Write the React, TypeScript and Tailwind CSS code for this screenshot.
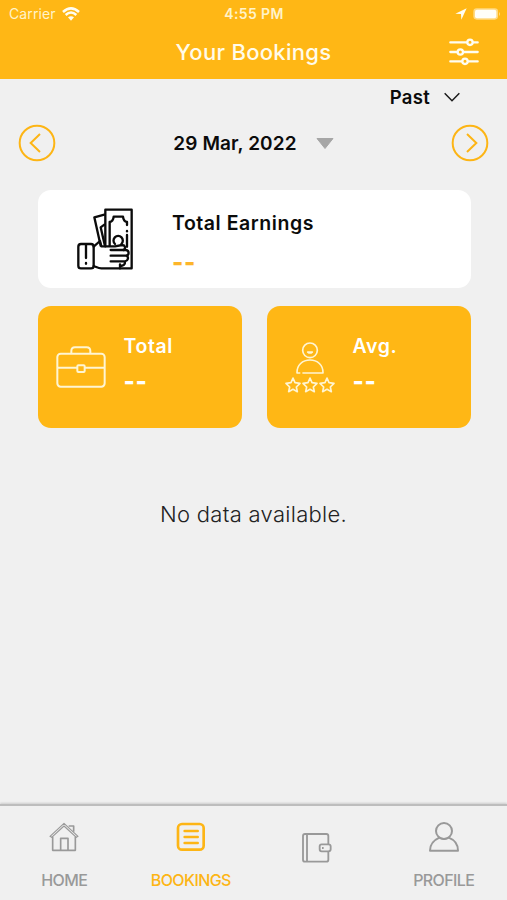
import { useState } from "react";
import type { ReactNode } from "react";

const MoneyIcon = () => (
  <svg
    viewBox="0 0 210 228"
    className="w-[70px] h-[76px] shrink-0"
    fill="none"
    stroke="#0b0b0b"
    strokeWidth="7"
    strokeLinejoin="round"
    strokeLinecap="round"
  >
    {/* bills */}
    <path d="M106 139V29H185V205H150" />
    <path d="M103 44L73 52L92 137M103 74L92 82L104 134" />
    <path d="M119 137V66C126 65 130 60 131 50H159C160 60 164 65 171 66V75M171 105V140" />
    <path d="M171 93v1" />
    <path d="M135 132A14 14 0 1 1 154 132" />
    {/* hand */}
    <path d="M71 140L90 123L94 139H135L156 135C166 136 168 144 161 150H122" />
    <path d="M160 150H168C178 152 178 164 170 167H122" />
    <path d="M170 167C177 172 174 183 165 184H122M165 184C166 194 160 198 150 198M71 198C80 201 84 205 94 205H150V193" />
    <path d="M33 132H63Q71 132 71 140V197Q71 205 63 205H33Q25 205 25 197V140Q25 132 33 132Z" />
    <path d="M48 134V174M48 189v2" />
  </svg>
);

const BriefcaseIcon = () => (
  <svg
    viewBox="0 0 150 126"
    className="w-[50px] h-[42px] shrink-0"
    fill="none"
    stroke="#fff5d2"
    strokeWidth="6"
    strokeLinejoin="round"
  >
    <rect x="4" y="23" width="142" height="99" rx="10" />
    <path d="M46 22V15Q46 4 57 4H92Q103 4 103 15V22" />
    <path d="M4 65H64M87 65H146" />
    <rect x="64" y="58" width="22" height="20" rx="3" />
  </svg>
);

const RatingIcon = () => (
  <svg
    viewBox="0 0 150 156"
    className="w-[50px] h-[52px] shrink-0"
    fill="none"
    stroke="#fff5d2"
    strokeWidth="5"
    strokeLinejoin="round"
    strokeLinecap="round"
  >
    <circle cx="75" cy="28" r="22" />
    <path d="M68 33Q75 39 82 33Z" />
    <path d="M44 96H36C35 72 53 57 75 57S115 72 114 96H54" />
    {[24, 75, 126].map((x) => (
      <path
        key={x}
        transform={`translate(${x} 133)`}
        d="M0 -22L6 -8L21 -6L10 5L13 19L0 12L-13 19L-10 5L-21 -6L-6 -8Z"
      />
    ))}
  </svg>
);

const HomeIcon = () => (
  <svg viewBox="0 0 90 90" className="w-[30px] h-[30px]" fill="none" stroke="#999" strokeWidth="5" strokeLinejoin="round">
    <path d="M3 43L45 4L87 43L82 46L45 12L8 46Z" strokeWidth="3.5" />
    <path d="M11 44V85H79V44M35 85V49H57V85M59 12H74V29" />
  </svg>
);

const BookingsIcon = () => (
  <svg viewBox="0 0 90 90" className="w-[30px] h-[30px]" fill="none" stroke="#fdb515" strokeWidth="8" strokeLinecap="round">
    <rect x="6" y="6" width="77" height="77" rx="12" />
    <path d="M26 27H65M26 45H65M26 63H65" />
  </svg>
);

const WalletIcon = () => (
  <svg viewBox="0 0 90 90" className="w-[30px] h-[30px]" fill="none" stroke="#999" strokeWidth="5.5" strokeLinejoin="round">
    <path d="M79 33V9Q79 3 73 3H9Q3 3 3 9V80Q3 86 9 86H73Q79 86 79 80V56M15 3V86" />
    <path d="M79 34H59Q53 34 53 40V49Q53 55 59 55H79Q86 55 86 49V40Q86 34 79 34Z" />
    <path d="M60 45h5" />
  </svg>
);

const ProfileIcon = () => (
  <svg viewBox="0 0 90 90" className="w-[30px] h-[30px]" fill="none" stroke="#999" strokeWidth="6" strokeLinejoin="round">
    <circle cx="45" cy="27" r="24" />
    <path d="M3 86C3 64 20 52 31 47Q45 55 59 47C72 52 87 64 87 86Z" />
  </svg>
);

function StatusBar() {
  return (
    <div className="grid grid-cols-3 items-center h-7 pl-[9px] pr-[6px] text-sm leading-none text-[#fff3ca]">
      <div className="flex items-center gap-[6px]">
        <span className="tracking-[0.1px]">Carrier</span>
        <svg viewBox="0 0 54 42" className="w-[18px] h-[14px]" fill="none" stroke="#fffdf2" strokeWidth="7.5">
          <path d="M3 15Q27 -7 51 15M11 24Q27 9 43 24" />
          <path d="M18 31Q27 24 36 31L27 41Z" fill="#fffdf2" stroke="none" />
        </svg>
      </div>
      <span className="text-center font-semibold text-sm leading-none tracking-[0.4px] pr-[2px]">4:55 PM</span>
      <div className="flex items-center justify-end gap-[6px]">
        <svg viewBox="0 0 36 36" className="w-3 h-3" fill="#fffdf2">
          <path d="M35 1L19 35L18 18L1 17Z" />
        </svg>
        <svg viewBox="0 0 84 36" className="w-[28px] h-3">
          <rect x="1" y="1" width="74" height="34" rx="10" fill="#ffda83" />
          <rect x="6" y="5" width="64" height="26" rx="6" fill="#fffef8" />
          <path d="M78 12Q84 18 78 24Z" fill="#ffda83" />
        </svg>
      </div>
    </div>
  );
}

type ArrowProps = { path: string; onClick: () => void };

function ArrowButton({ path, onClick }: ArrowProps) {
  return (
    <button onClick={onClick} className="w-[38px] h-[38px]">
      <svg viewBox="0 0 114 114" fill="none" stroke="#fdb515" strokeWidth="6">
        <circle cx="57" cy="57" r="52" />
        <path d={path} />
      </svg>
    </button>
  );
}

type StatCardProps = { icon: ReactNode; label: string; value: string };

function StatCard({ icon, label, value }: StatCardProps) {
  return (
    <div className="flex w-[204px] h-[122px] rounded-[13px] bg-[#ffb715] pl-[18px] text-white">
      <div className="w-[68px] flex items-center">{icon}</div>
      <div className="pt-7 font-semibold">
        <div className="text-[19.5px] leading-6 tracking-[0.6px]">{label}</div>
        <div className="mt-3 text-[24px] leading-6 font-extrabold tracking-[0.8px]">{value}</div>
      </div>
    </div>
  );
}

const tabs = [
  { name: "HOME", icon: <HomeIcon />, label: true },
  { name: "BOOKINGS", icon: <BookingsIcon />, label: true },
  { name: "WALLET", icon: <WalletIcon />, label: false },
  { name: "PROFILE", icon: <ProfileIcon />, label: true },
];

export default function App() {
  const [date, setDate] = useState(new Date(2022, 2, 29));
  const [active, setActive] = useState("BOOKINGS");

  const moveDay = (days: number) => {
    const next = new Date(date);
    next.setDate(next.getDate() + days);
    setDate(next);
  };

  const month = date.toLocaleString("en-US", { month: "short" });
  const dateLabel = `${date.getDate()} ${month}, ${date.getFullYear()}`;

  return (
    <div className="flex flex-col w-[507px] h-[900px] overflow-hidden bg-[#f0f0f0] text-[#0b0b0b] font-[Inter,sans-serif]">
      <header className="h-[79px] bg-[#ffb715]">
        <StatusBar />
        <div className="grid grid-cols-[1fr_auto_1fr] items-center h-12 pr-7">
          <h1 className="col-start-2 pl-7 text-[22px] font-medium text-[#fffbea] tracking-[0.3px]">
            Your Bookings
          </h1>
          <button className="justify-self-end">
            <svg viewBox="0 0 90 84" className="w-[30px] h-7" fill="#ffb715" stroke="#fffdf2" strokeWidth="7" strokeLinecap="round">
              <path d="M4 13H86M4 42H86M4 70H86" />
              <circle cx="63" cy="13" r="8" />
              <circle cx="34" cy="42" r="8" />
              <circle cx="48" cy="70" r="8" />
            </svg>
          </button>
        </div>
      </header>

      <main className="flex-1">
        <div className="flex items-center justify-end gap-[14px] h-9 pr-[47px]">
          <span className="pt-[2px] text-[18.5px] font-semibold tracking-[0.3px]">Past</span>
          <svg viewBox="0 0 48 30" className="w-4 h-[10px]" fill="none" stroke="#1a1a1a" strokeWidth="4.5">
            <path d="M2 4L24 26L46 4" />
          </svg>
        </div>

        <div className="flex items-center justify-between pl-[18px] pr-[18px] mt-[9px]">
          <ArrowButton path="M66 30L38 57L66 84" onClick={() => moveDay(-1)} />
          <button className="flex items-center gap-[19px]">
            <span className="pt-[2px] text-[19px] font-semibold tracking-[0.1px]">{dateLabel}</span>
            <svg viewBox="0 0 18 11" className="w-[18px] h-[11px]">
              <path d="M1 0.5H17L9 10.5Z" fill="#a6a6a6" stroke="#a6a6a6" strokeLinejoin="round" />
            </svg>
          </button>
          <ArrowButton path="M48 30L76 57L48 84" onClick={() => moveDay(1)} />
        </div>

        <section className="ml-[37.5px] mr-[36.5px] mt-7 space-y-[18px]">
          <div className="flex h-[98px] rounded-[13px] bg-white pl-[32.5px] pt-[10px]">
            <MoneyIcon />
            <div className="pl-8 pt-[11px]">
              <div className="text-[19.5px] leading-6 font-semibold tracking-[0.55px]">Total Earnings</div>
              <div className="mt-4 text-[24px] leading-6 font-extrabold text-[#fdb52a] tracking-[0.8px]">--</div>
            </div>
          </div>
          <div className="flex justify-between">
            <StatCard icon={<BriefcaseIcon />} label="Total" value="--" />
            <StatCard icon={<RatingIcon />} label="Avg." value="--" />
          </div>
        </section>

        <p className="mt-[72px] text-center text-[22px] leading-7 font-light text-[#222] tracking-[0.3px]">
          No data available.
        </p>
      </main>

      <nav className="grid grid-cols-4 h-24 pl-px border-t-2 border-[#bdbdbd] bg-[#f0f0f0] shadow-[0_-1px_2px_rgba(0,0,0,0.15)]">
        {tabs.map((tab) => (
          <button
            key={tab.name}
            aria-label={tab.name}
            onClick={() => setActive(tab.name)}
            className={`flex flex-col items-center text-base font-medium tracking-[-0.6px] ${
              tab.label ? "pt-4" : "pt-[27px]"
            } ${active === tab.name ? "text-[#fdb515]" : "text-[#999]"}`}
          >
            {tab.icon}
            {tab.label && <span className="mt-4">{tab.name}</span>}
          </button>
        ))}
      </nav>
    </div>
  );
}
